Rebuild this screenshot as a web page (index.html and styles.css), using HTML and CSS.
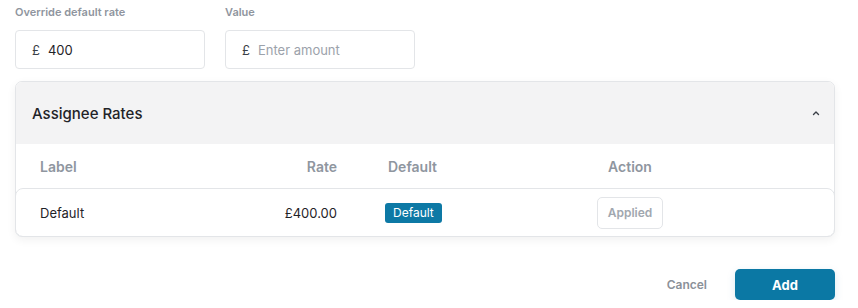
FILE: index.html
```html
<!DOCTYPE html>
<html>
<head>
<meta charset="utf-8">
<link rel="stylesheet" href="styles.css">
</head>
<body>
<div class="page">
  <div class="fields">
    <div class="field">
      <label class="field-label">Override default rate</label>
      <div class="input"><span class="cur">£</span><span class="val">400</span></div>
    </div>
    <div class="field">
      <label class="field-label">Value</label>
      <div class="input"><span class="cur">£</span><span class="ph">Enter amount</span></div>
    </div>
  </div>

  <div class="card">
    <div class="card-head">
      <span class="card-title">Assignee Rates</span>
      <svg class="chev" width="8" height="6" viewBox="0 0 8 6"><path d="M1.5 4.5 L4 2 L6.5 4.5" fill="none" stroke="#3a3f47" stroke-width="1.4" stroke-linecap="round" stroke-linejoin="round"/></svg>
    </div>
    <div class="thead">
      <div class="c1">Label</div>
      <div class="c2">Rate</div>
      <div class="c3 h3">Default</div>
      <div class="c4">Action</div>
      <div class="c5"></div>
    </div>
    <div class="trow">
      <div class="c1">Default</div>
      <div class="c2">£400.00</div>
      <div class="c3"><span class="badge">Default</span></div>
      <div class="c4"><span class="applied">Applied</span></div>
      <div class="c5"></div>
    </div>
  </div>

  <div class="footer">
    <button class="btn-cancel">Cancel</button>
    <button class="btn-add">Add</button>
  </div>
</div>
</body>
</html>
```

FILE: styles.css
```css
* { box-sizing: border-box; }
html, body { margin: 0; padding: 0; background: #fff; }
body { font-family: Inter, "Noto Sans", sans-serif; color: #1f2328; }
.page { padding: 4px 23px 0 15px; width: 858px; }

.fields { display: flex; gap: 20px; }
.field { width: 190px; display: flex; flex-direction: column; }
.field-label { font-size: 11px; line-height: 16px; font-weight: 600; color: #8f959e; margin-bottom: 10px; }
.input { height: 39px; border: 1px solid #e3e5e8; border-radius: 4px; display: flex; align-items: center; padding-left: 16px; font-size: 13px; }
.cur { color: #3a3f47; margin-right: 8px; font-size: 13px; }
.val { color: #1f2328; }
.ph { color: #9ca2ab; }

.card { margin-top: 12px; border: 1px solid #e3e5e8; border-radius: 7px; box-shadow: 0 3px 10px rgba(0,0,0,0.06); overflow: hidden; background: #fff; }
.card-head { height: 62px; background: #f3f3f4; display: flex; align-items: center; justify-content: space-between; padding: 0 14px 0 16px; }
.card-title { font-size: 15px; font-weight: 500; color: #1f2328; }
.chev { display: block; }

.thead, .trow { display: grid; grid-template-columns: 184px 145px 155px 260px 1fr; align-items: center; }
.thead { height: 44px; font-size: 14px; font-weight: 600; color: #8f969f; }
.trow { height: 49px; border: 1px solid #e3e5e8; border-radius: 8px; margin: 0 -1px -1px; font-size: 13px; color: #1f2328; }
.c1 { padding-left: 24px; }
.c2 { text-align: right; padding-right: 8px; }
.c3 { padding-left: 40px; }
.h3 { padding-left: 43px; }
.c4 { text-align: center; }

.badge { display: inline-block; height: 20px; line-height: 20px; padding: 0 8px; background: #0d79a5; color: #fff; font-size: 12px; border-radius: 3px; }
.applied { display: inline-block; height: 32px; line-height: 30px; padding: 0 10px; border: 1px solid #e3e5e8; border-radius: 5px; font-size: 12px; font-weight: 600; color: #a1a7af; }

.footer { display: flex; justify-content: flex-end; margin-top: 32px; }
button { font-family: Inter, "Noto Sans", sans-serif; border: none; cursor: pointer; }
.btn-cancel { background: none; font-size: 12px; font-weight: 600; color: #8b9199; padding: 0 28px 0 0; height: 31px; }
.btn-add { width: 100px; height: 31px; background: #0b78a4; color: #fff; font-size: 13px; font-weight: 700; border-radius: 5px; box-shadow: 0 3px 8px rgba(11,120,164,0.15); }
```
